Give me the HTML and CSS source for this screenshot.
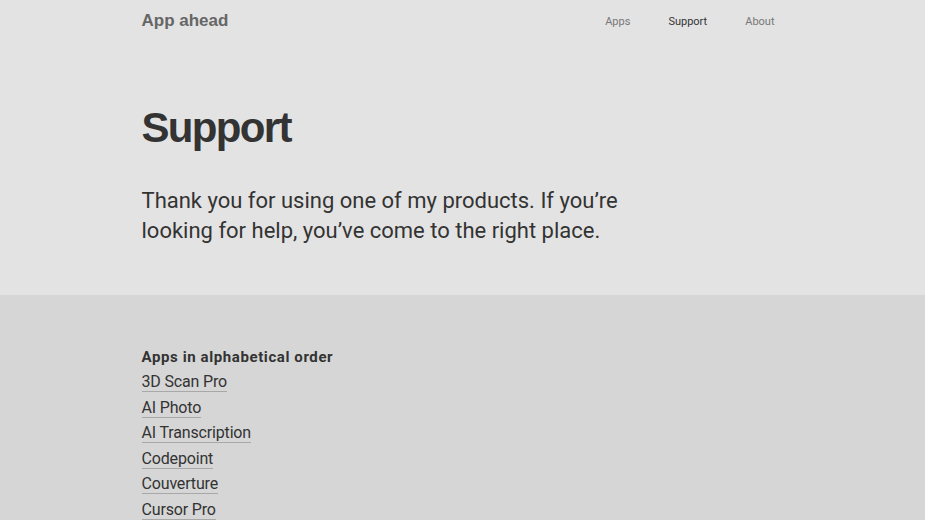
FILE: index.html
```html
<!DOCTYPE html>
<html lang="en">
<head>
<meta charset="utf-8">
<title>Support – App ahead</title>
<link rel="stylesheet" href="styles.css">
</head>
<body>
<section class="hero">
  <div class="container">
    <header class="site-header">
      <a class="brand" href="#">App ahead</a>
      <nav class="nav">
        <a href="#">Apps</a>
        <a href="#" class="active">Support</a>
        <a href="#">About</a>
      </nav>
    </header>
    <h1 class="title">Support</h1>
    <p class="lead">Thank you for using one of my products. If you’re looking for help, you’ve come to the right place.</p>
  </div>
</section>
<section class="apps">
  <div class="container">
    <h2 class="apps-title">Apps in alphabetical order</h2>
    <ul class="app-list">
      <li><a href="#">3D Scan Pro</a></li>
      <li><a href="#">AI Photo</a></li>
      <li><a href="#">AI Transcription</a></li>
      <li><a href="#">Codepoint</a></li>
      <li><a href="#">Couverture</a></li>
      <li><a href="#">Cursor Pro</a></li>
    </ul>
  </div>
</section>
</body>
</html>
```
FILE: styles.css
```css
* { box-sizing: border-box; }
html, body { margin: 0; padding: 0; }
body {
  font-family: Roboto, "Liberation Sans", sans-serif;
  color: #333;
  background: #d6d6d6;
}
a { color: inherit; text-decoration: none; }
.container {
  width: 642px;
  margin: 0 auto;
}
.hero {
  background: #e3e3e3;
  padding-bottom: 49px;
}
.site-header {
  display: flex;
  justify-content: space-between;
  align-items: center;
  height: 42px;
}
.brand {
  font-family: "Liberation Sans", Arial, sans-serif;
  font-weight: 700;
  font-size: 17px;
  color: #666;
}
.nav {
  display: flex;
  gap: 38px;
  padding-right: 9px;
}
.nav a {
  font-size: 11px;
  color: #777;
}
.nav a.active { color: #333; }
.title {
  font-family: "Liberation Sans", Arial, sans-serif;
  font-weight: 700;
  font-size: 42px;
  letter-spacing: -0.04em;
  line-height: 50px;
  margin: 61px 0 0;
  color: #333;
}
.lead {
  font-size: 22px;
  line-height: 30px;
  margin: 33px 0 0;
  max-width: 500px;
  color: #333;
}
.apps {
  padding-top: 51px;
}
.apps-title {
  font-size: 15px;
  font-weight: 700;
  letter-spacing: 0.04em;
  margin: 0;
  line-height: 22px;
}
.app-list {
  list-style: none;
  margin: 1px 0 0;
  padding: 0;
}
.app-list li {
  font-size: 16px;
  line-height: 25.6px;
  letter-spacing: -0.01em;
}
.app-list a {
  border-bottom: 1px solid #a8a8a8;
}
```
